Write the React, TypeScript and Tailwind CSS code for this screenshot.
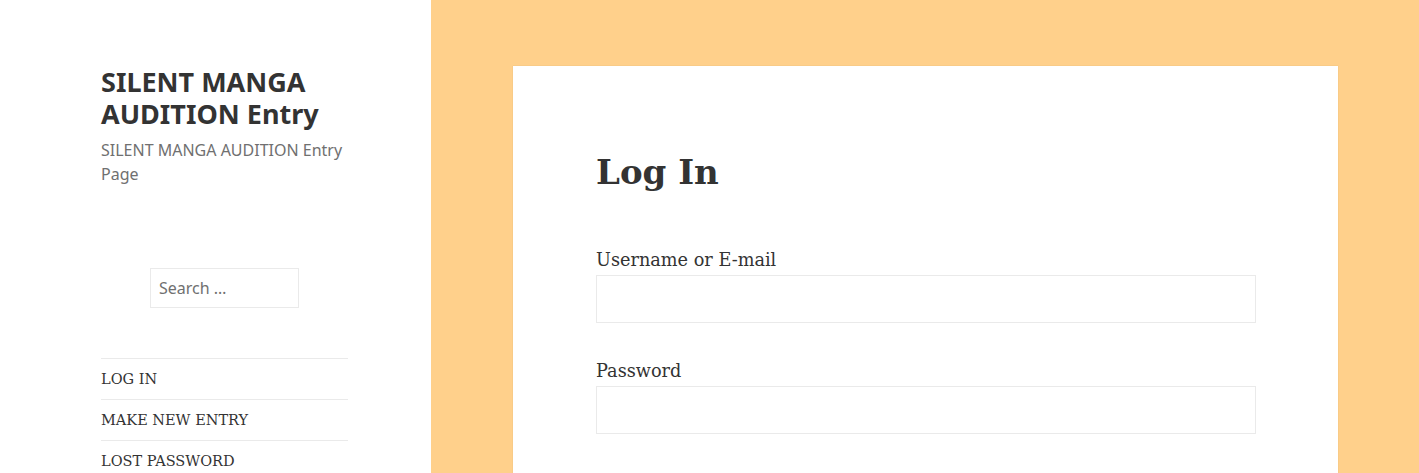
import React from "react";

const menu = ["LOG IN", "MAKE NEW ENTRY", "LOST PASSWORD"];

const App = () => {
  return (
    <div className="flex h-[473px] w-full overflow-hidden bg-[#ffd08b]">
      <aside className="w-[431px] shrink-0 bg-white pl-[101px] pt-[66px]">
        <div className="w-[247px]">
          <h1 className="font-['Noto_Sans',sans-serif] text-[27px] font-bold leading-[32px] text-[#333333]">
            SILENT MANGA AUDITION Entry
          </h1>
          <p className="mt-[8px] font-['Noto_Sans',sans-serif] text-[16px] leading-[24px] text-[#707070]">
            SILENT MANGA AUDITION Entry Page
          </p>
          <div className="mt-[82px] flex justify-center">
            <input
              type="search"
              placeholder="Search …"
              className="h-[40px] w-[149px] border border-[#eaeaea] px-[8px] font-['Noto_Sans',sans-serif] text-[16px] text-[#333333] placeholder:text-[#707070] outline-none"
            />
          </div>
          <ul className="mt-[50px] font-['DejaVu_Serif',serif] text-[14.5px] text-[#333333]">
            {menu.map((item) => (
              <li key={item} className="border-t border-[#eaeaea] py-[9px] leading-[22px]">
                {item}
              </li>
            ))}
          </ul>
        </div>
      </aside>
      <main className="flex-1 pl-[82px] pt-[66px]">
        <div className="h-[500px] w-[825px] bg-white px-[83px] pt-[80px] shadow-[0_0_1px_rgba(0,0,0,0.15)]">
          <h2 className="font-['DejaVu_Serif',serif] text-[34px] font-bold leading-[52px] text-[#333333]">
            Log In
          </h2>
          <div className="mt-[49px] w-[660px]">
            <label className="block font-['DejaVu_Serif',serif] text-[17.7px] leading-[26px] text-[#333333]">
              Username or E-mail
            </label>
            <input type="text" className="mt-[2px] block h-[48px] w-full border border-[#eaeaea] outline-none" />
            <label className="mt-[35px] block font-['DejaVu_Serif',serif] text-[17.7px] leading-[26px] text-[#333333]">
              Password
            </label>
            <input type="password" className="mt-[2px] block h-[48px] w-full border border-[#eaeaea] outline-none" />
          </div>
        </div>
      </main>
    </div>
  );
};

export default App;
